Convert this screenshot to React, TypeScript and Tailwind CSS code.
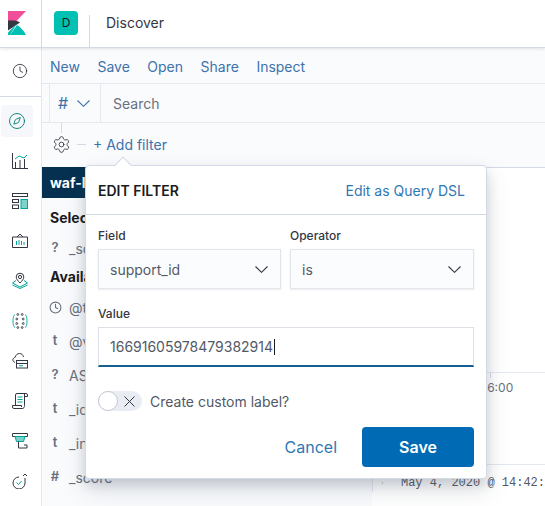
import { ChevronRight, Clock, Compass, Settings } from 'lucide-react';

const font = { fontFamily: 'Inter, "Noto Sans", sans-serif' };

function Chevron({ color = '#343741' }: { color?: string }) {
  return (
    <svg width="13" height="7" viewBox="0 0 13 7" fill="none" stroke={color} strokeWidth="1.1">
      <path d="M0.5 0.5L6.500 6.300L12.500 0.5" />
    </svg>
  );
}

function VisualizeIcon() {
  return (
    <svg width="16" height="16" viewBox="0 0 16 16" fill="none" stroke="#343741" strokeWidth="1">
      <path d="M0.5 0v15.5H16" />
      <path d="M3.5 15V9M8 15V7M12.5 15V6" stroke="#343741" />
      <path d="M3 6l4-3 5 2 3-3" stroke="#00a69b" />
    </svg>
  );
}

function DashboardIcon() {
  return (
    <svg width="16" height="16" viewBox="0 0 16 16" fill="none" stroke="#343741">
      <rect x="0.5" y="0.5" width="15" height="3" />
      <rect x="0.5" y="6.5" width="6" height="3" />
      <rect x="0.5" y="12" width="6" height="3.5" />
      <rect x="9" y="6.5" width="6.5" height="9" fill="#7fd2cb" stroke="#00a69b" />
    </svg>
  );
}

function CanvasIcon() {
  return (
    <svg width="16" height="16" viewBox="0 0 16 16" fill="none" stroke="#343741">
      <path d="M0.5 4h15v10.5H0.5zM5 4l3-3 3 3" />
      <path d="M4.5 12V8M7 12V7M9.5 12V8M12 12V9" stroke="#00a69b" />
    </svg>
  );
}

function MapsIcon() {
  return (
    <svg width="16" height="17" viewBox="0 0 16 17" fill="none" stroke="#343741">
      <circle cx="8" cy="5" r="1.6" />
      <path d="M8 11C6 9 4.2 7 4.2 5a3.8 3.8 0 0 1 7.6 0c0 2-1.8 4-3.8 6z" />
      <path d="M4 8.5L0.5 11 8 15l7.5-4L12 8.5M0.5 13L8 16.5l7.5-3.5" stroke="#00a69b" />
    </svg>
  );
}

function MlIcon() {
  return (
    <svg width="16" height="16" viewBox="0 0 16 16" fill="none" stroke="#343741" strokeWidth="0.9">
      <path d="M3 1.5C1.5 2.5 1 4 1 8s.5 5.5 2 6.5M13 1.5c1.500 1 2 2.500 2 6.500s-.5 5.500-2 6.500" stroke="#00a69b" />
      <circle cx="5.800" cy="1.500" r="0.9" />
      <circle cx="10.200" cy="1.500" r="0.9" />
      <circle cx="4.800" cy="6" r="0.9" />
      <circle cx="11.200" cy="6" r="0.9" />
      <circle cx="4.800" cy="10.500" r="0.9" />
      <circle cx="11.200" cy="10.500" r="0.9" />
      <circle cx="5.800" cy="14.500" r="0.9" />
      <circle cx="10.200" cy="14.500" r="0.9" />
    </svg>
  );
}

function InfraIcon() {
  return (
    <svg width="16" height="16" viewBox="0 0 16 16" fill="none" stroke="#343741">
      <path d="M3 9.500C1 8.500 0.500 7 1 6c.5-1 1.500-1.500 2-1.500C3.500 2 5.500 0.500 7.500 0.500c2 0 3.500 1.200 4 3.500" />
      <rect x="4.500" y="7.500" width="11" height="7.500" />
      <path d="M4.500 10.500h11" />
      <path d="M7 12.800h4" stroke="#00a69b" />
    </svg>
  );
}

function LogsIcon() {
  return (
    <svg width="16" height="16" viewBox="0 0 16 16" fill="none" stroke="#343741">
      <path d="M3.500 12.500V2a1.500 1.500 0 0 1 1.500-1.500h9A1.500 1.500 0 0 1 15.500 2v1.500H12.500M12.500 1v11.500A2.500 2.500 0 0 1 10 15.500H2A1.500 1.500 0 0 1 .5 14v-1.500h9V14" />
      <path d="M5.500 4h5M5.500 6.500h5M5.500 9h5" stroke="#00a69b" />
    </svg>
  );
}

function ApmIcon() {
  return (
    <svg width="16" height="16" viewBox="0 0 16 16" fill="none" stroke="#343741">
      <path d="M3 3.500H0.500V.500h15v3H13" />
      <path d="M3 3.500h10l-1.500 5h-7z" fill="#7fd2cb" stroke="#00a69b" />
      <path d="M6.500 8.500v6.500h8.500v-3H12" />
    </svg>
  );
}

function UptimeIcon() {
  return (
    <svg width="16" height="16" viewBox="0 0 16 16" fill="none" stroke="#343741">
      <path d="M13 5v5a6 6 0 1 1-12 0 6 6 0 0 1 6-6" />
      <path d="M11 3l2-2 2 2" />
      <path d="M4.500 9.500l2 2 3-3.500" stroke="#00a69b" />
    </svg>
  );
}

function KibanaLogo() {
  return (
    <svg width="18" height="24" viewBox="0 0 18 24">
      <path d="M0 0h18L0 19z" fill="#f04e98" />
      <path d="M0 9.500h4c3 0 6 .5 8 2L0 19.500z" fill="#343741" />
      <path d="M2 24l7-10c4 2.500 7 6 9 10z" fill="#00bfb3" />
      <path d="M0 21.500L8.500 13 2 24H0z" fill="#00bfb3" />
    </svg>
  );
}

const navIcons = [
  <VisualizeIcon key="visualize" />,
  <DashboardIcon key="dashboard" />,
  <CanvasIcon key="canvas" />,
  <MapsIcon key="maps" />,
  <MlIcon key="ml" />,
  <InfraIcon key="infra" />,
  <LogsIcon key="logs" />,
  <ApmIcon key="apm" />,
  <UptimeIcon key="uptime" />,
];

const menuItems = ['New', 'Save', 'Open', 'Share', 'Inspect'];

const selectedFields = [{ type: '?', name: '_source' }];
const availableFields = [
  { type: 'clock', name: '@timestamp' },
  { type: 't', name: '@version' },
  { type: '?', name: 'ASN' },
  { type: 't', name: '_id' },
  { type: 't', name: '_index' },
  { type: '#', name: '_score' },
];

function FieldRow({ type, name }: { type: string; name: string }) {
  return (
    <div className="ml-[-2px] flex h-[34px] items-center text-[14px] text-[#69707d]">
      <span className="flex w-[14px] justify-center text-[13px] font-semibold">
        {type === 'clock' ? <Clock size={13} strokeWidth={2} /> : type}
      </span>
      <span className="ml-[7px] whitespace-nowrap">{name}</span>
    </div>
  );
}

function SelectBox({ label, value }: { label: string; value: string }) {
  return (
    <div>
      <div className="h-[20px] text-[12px] font-medium leading-[20px] text-[#343741]">{label}</div>
      <div className="mt-[3px] flex h-[40px] items-center justify-between border border-[#e2e5ec] bg-[#fbfcfd] pl-[11px] pr-[12px] text-[14px] text-[#535966] shadow-[0_1px_2px_rgba(0,0,0,0.08)]">
        <span>{value}</span>
        <Chevron />
      </div>
    </div>
  );
}

function EditFilterPopover() {
  return (
    <div className="absolute left-[85px] top-[165px] z-10 h-[314px] w-[402px] rounded-[4px] border border-[#d3dae6] bg-white shadow-[0_6px_12px_rgba(65,78,101,0.2),0_12px_24px_rgba(65,78,101,0.15)]">
      <div className="absolute left-[31px] top-[-7px] h-[12px] w-[12px] rotate-45 border-l border-t border-[#d3dae6] bg-white" />
      <div className="relative flex h-[49px] items-center justify-between border-b border-[#d3dae6] pl-[12px] pr-[21px]">
        <span className="text-[14px] font-semibold text-[#1a1c21]">EDIT FILTER</span>
        <span className="text-[14px] text-[#2f78b4]">Edit as Query DSL</span>
      </div>
      <div className="px-[12px] pt-[11px]">
        <div className="grid grid-cols-[183px_184px] gap-x-[9px]">
          <SelectBox label="Field" value="support_id" />
          <SelectBox label="Operator" value="is" />
        </div>
        <div className="mt-[15px] h-[20px] text-[12px] font-medium leading-[20px] text-[#343741]">Value</div>
        <div className="mt-[3px] flex h-[40px] w-full items-center border border-b-2 border-[#dcdfe5] border-b-[#14608f] bg-white pl-[11px] text-[14px] text-[#535966]">
          <span>16691605978479382914</span>
          <span className="ml-px h-[16px] w-px bg-[#1a1c21]" />
        </div>
        <div className="mt-[24px] flex h-[20px] items-center">
          <div className="relative h-[20px] w-[44px] rounded-full bg-[#e9edf3]">
            <span className="absolute left-0 top-0 h-[20px] w-[20px] rounded-full border border-[#c2c8d2] bg-white" />
            <svg width="11" height="11" viewBox="0 0 11 11" fill="none" stroke="#343741" strokeWidth="1" className="absolute left-[26px] top-[4.500px]">
              <path d="M0.5 0.5l10 10M10.500 0.5l-10 10" />
            </svg>
          </div>
          <span className="ml-[8px] text-[14px] text-[#535966]">Create custom label?</span>
        </div>
        <div className="mt-[16px] flex items-center justify-end">
          <span className="mr-[25px] text-[16px] text-[#2f78b4]">Cancel</span>
          <div className="flex h-[40px] w-[112px] items-center justify-center rounded-[4px] bg-[#006bb4] text-[16px] font-semibold text-white">
            Save
          </div>
        </div>
      </div>
    </div>
  );
}

export default function App() {
  return (
    <div className="relative flex h-[506px] w-[545px] flex-col overflow-hidden bg-white" style={font}>
      {/* Top header */}
      <div className="z-[1] flex h-[48px] shrink-0 border-b border-[#d3dae6] bg-white shadow-[0_1px_3px_rgba(65,78,101,0.15)]">
        <div className="flex h-[47px] w-[42px] items-center border-r border-[#d3dae6] pb-[2px] pl-[8px]">
          <KibanaLogo />
        </div>
        <div className="ml-[12px] mt-[11px] flex h-[24px] w-[24px] items-center justify-center rounded-[4px] bg-[#00bfb3] text-[12px] text-[#1a1c21]">
          D
        </div>
        <div className="ml-[11px] mt-[15px] h-[32px] w-px bg-[#d3dae6]" />
        <div className="ml-[16px] mt-[12px] text-[14px] text-[#343741]">Discover</div>
      </div>

      <div className="flex min-h-0 flex-1">
        {/* Left nav */}
        <div className="flex w-[42px] shrink-0 flex-col border-r border-[#e4e8ef] bg-white">
          <div className="flex h-[49px] items-center justify-center border-b border-[#d3dae6] pb-[2px] pr-px">
            <Clock size={16} strokeWidth={1.3} className="text-[#343741]" />
          </div>
          <div className="mt-[4px] flex h-[40px] items-center">
            <div className="ml-px flex h-[32px] w-[32px] items-center justify-center rounded-[4px] bg-[#f5f7fa]">
              <Compass size={18} strokeWidth={1.2} className="text-[#017d73]" />
            </div>
          </div>
          {navIcons.map((icon) => (
            <div key={icon.key} className="flex h-[40px] shrink-0 items-center justify-center pb-px pr-px">
              {icon}
            </div>
          ))}
        </div>

        {/* Main column */}
        <div className="flex min-w-0 flex-1 flex-col bg-[#fafbfd]">
          <div className="flex h-[35px] shrink-0 items-center gap-[17.5px] pl-[8px] pt-[1px] text-[14px] text-[#3d72ab]">
            {menuItems.map((item) => (
              <span key={item}>{item}</span>
            ))}
          </div>
          <div className="flex h-[40px] shrink-0 border-y border-[#e4e8ef]">
            <div className="ml-[7px] flex w-[52px] items-center border-x border-[#e4e8ef] pl-[8px] text-[#3d72ab]">
              <span className="text-[16px]">#</span>
              <span className="ml-[9px] mt-px">
                <Chevron color="#3d72ab" />
              </span>
            </div>
            <div className="flex items-center pl-[12px] text-[14px] text-[#69707d]">Search</div>
          </div>
          <div className="relative flex h-[44px] shrink-0 items-center pb-px pl-[10px]">
            <span className="absolute left-[19px] top-0 h-[10px] w-px bg-[#d3dae6]" />
            <Settings size={19} strokeWidth={1.1} className="text-[#343741]" />
            <span className="ml-[6px] h-px w-[9px] bg-[#d3dae6]" />
            <span className="ml-[7px] text-[14px] text-[#3d72ab]">+ Add filter</span>
          </div>

          <div className="flex min-h-0 flex-1">
            {/* Field sidebar */}
            <div className="w-[330px] shrink-0 overflow-hidden">
              <div className="flex h-[31px] items-center bg-[#05304f] pl-[8px] text-[14px] font-bold text-white">
                waf-logs-*
              </div>
              <div className="pl-[8px]">
                <div className="mt-[9px] h-[22px] text-[14px] font-bold leading-[22px] text-[#1a1c21]">Selected fields</div>
                <div className="mt-[2px]">
                  {selectedFields.map((f) => (
                    <FieldRow key={f.name} type={f.type} name={f.name} />
                  ))}
                </div>
                <div className="mt-[1px] h-[22px] text-[14px] font-bold leading-[22px] text-[#1a1c21]">Available fields</div>
                <div className="mt-[2px]">
                  {availableFields.map((f) => (
                    <FieldRow key={f.name} type={f.type} name={f.name} />
                  ))}
                </div>
              </div>
            </div>

            {/* Results */}
            <div className="flex min-w-0 flex-1 flex-col border-t border-[#d3dae6] bg-white">
              <div className="h-[205px] shrink-0 border-b border-[#e4e8ef]" />
              <div className="relative h-[92px] shrink-0 border-b border-[#e4e8ef]">
                <span className="absolute left-[118px] top-0 h-[5px] w-px bg-[#d3dae6]" />
                <span className="absolute left-[92px] top-[6px] text-[12px] text-[#69707d]">13:36:00</span>
              </div>
              <div className="flex items-center whitespace-nowrap border-l border-[#e4e8ef] pl-[7px] pt-[9px] font-['Liberation_Mono'] text-[12px] text-[#535966]">
                <ChevronRight size={12} strokeWidth={1.5} />
                <span className="ml-[16px]">May 4, 2020 @ 14:42:</span>
              </div>
            </div>
          </div>
        </div>
      </div>

      <EditFilterPopover />
    </div>
  );
}
